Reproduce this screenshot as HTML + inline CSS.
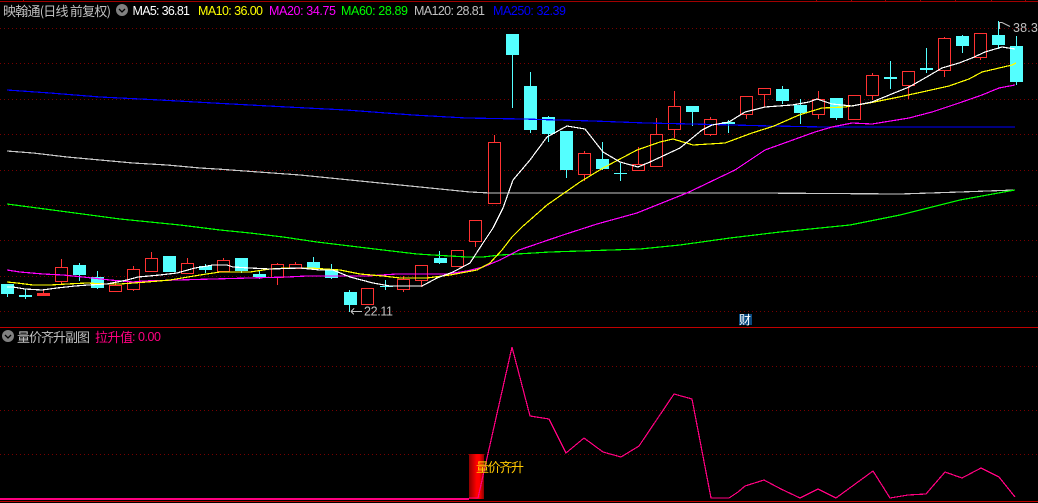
<!DOCTYPE html>
<html><head><meta charset="utf-8"><style>
html,body{margin:0;padding:0;background:#000;width:1038px;height:503px;overflow:hidden}
svg{display:block}
text{font-family:"Liberation Sans","WenQuanYi Zen Hei",sans-serif;font-size:12.5px}
.c{font-family:"WenQuanYi Zen Hei","Noto Sans CJK SC",sans-serif;font-size:13px}
.l{fill:none;stroke-width:1.2;shape-rendering:crispEdges}
</style></head><body>
<svg width="1038" height="503" viewBox="0 0 1038 503" xmlns="http://www.w3.org/2000/svg">
<defs><linearGradient id="b" x1="0" x2="1" y1="0" y2="0"><stop offset="0" stop-color="#8c0000"/><stop offset=".5" stop-color="#ff0000"/><stop offset=".7" stop-color="#ff0000"/><stop offset="1" stop-color="#8c0000"/></linearGradient></defs>
<rect width="1038" height="503" fill="#000"/>
<g shape-rendering="crispEdges">
<path d="M0 1.5H1038M23.5 0v1M816.5 0v1M851.5 0v1M885.5 0v1M920.5 0v1M955.5 0v1M991.5 0v1M1025.5 0v1" stroke="#a00000" fill="none"/>
<path d="M0 327.5H1038M0 501.5H1038" stroke="#c00000" fill="none"/>
<path d="M0 28.5H1038M0 63.5H1038M0 99.5H1038M0 134.5H1038M0 170.5H1038M0 205.5H1038M0 240.5H1038M0 276.5H1038M0 311.5H1038M0 366.5H1038M0 410.5H1038M0 454.5H1038" stroke="#780000" stroke-dasharray="1 3" fill="none"/>
<!-- red wicks -->
<path stroke="#ff3232" fill="none" d="M43.5 289V296M61.5 259V284M115.5 281V291M133.5 266V291M151.5 252V258M187.5 258V263M223.5 258V260M277.5 263V285M295.5 262V264M403.5 276V292M421.5 280V287M457.5 266V267M475.5 241V247M494.5 135V142M584.5 151V181M638.5 147V170M656.5 118V134M674.5 91V138M710.5 117V136M746.5 114V119M764.5 94V107M818.5 91V119M854.5 119V120M872.5 73V100M908.5 85V99M944.5 37V77M980.5 57V60"/>
<rect x="37" y="293" width="13" height="3" fill="#ff3232"/>
<!-- red bodies -->
<g fill="#000" stroke="#ff3232">
<rect x="55.5" y="267.5" width="12" height="14"/><rect x="109.5" y="285.5" width="12" height="6"/><rect x="127.5" y="269.5" width="12" height="20"/><rect x="145.5" y="258.5" width="12" height="13"/><rect x="181.5" y="263.5" width="12" height="10"/><rect x="217.5" y="260.5" width="12" height="11"/><rect x="271.5" y="264.5" width="12" height="13"/><rect x="289.5" y="264.5" width="12" height="4"/><rect x="361.5" y="288.5" width="12" height="16"/><rect x="397.5" y="279.5" width="12" height="10"/><rect x="415.5" y="265.5" width="12" height="15"/><rect x="451.5" y="250.5" width="12" height="16"/><rect x="469.5" y="220.5" width="12" height="21"/><rect x="488.5" y="142.5" width="12" height="61"/><rect x="578.5" y="153.5" width="12" height="21"/><rect x="632.5" y="164.5" width="12" height="6"/><rect x="650.5" y="134.5" width="12" height="32"/><rect x="668.5" y="106.5" width="12" height="23"/><rect x="704.5" y="119.5" width="12" height="15"/><rect x="740.5" y="96.5" width="12" height="18"/><rect x="758.5" y="88.5" width="12" height="6"/><rect x="812.5" y="99.5" width="12" height="15"/><rect x="848.5" y="95.5" width="12" height="24"/><rect x="866.5" y="75.5" width="12" height="20"/><rect x="902.5" y="71.5" width="12" height="14"/><rect x="938.5" y="38.5" width="12" height="32"/><rect x="974.5" y="33.5" width="12" height="24"/>
</g>
<!-- cyan wicks -->
<path stroke="#54ffff" fill="none" d="M7.5 284V297M25.5 289V299M79.5 263V281M97.5 271V289M205.5 264V273M241.5 258V273M259.5 270V279M313.5 257V270M331.5 264V279M349.5 290V312M385.5 280V290M439.5 251V264M512.5 34V108M530.5 72V133M548.5 116V142M566.5 131V178M602.5 142V170M620.5 163V181M692.5 106V126M728.5 120V133M782.5 86V104M800.5 99V124M836.5 98V120M890.5 61V89M926.5 48V73M962.5 35V53M998.5 21V49M1016.5 36V85"/>
<!-- cyan bodies -->
<g fill="#54ffff">
<rect x="1" y="284" width="13" height="10"/><rect x="19" y="295" width="13" height="2"/><rect x="73" y="265" width="13" height="10"/><rect x="91" y="277" width="13" height="11"/><rect x="163" y="256" width="13" height="16"/><rect x="199" y="266" width="13" height="4"/><rect x="235" y="258" width="13" height="13"/><rect x="253" y="274" width="13" height="3"/><rect x="307" y="262" width="13" height="6"/><rect x="325" y="270" width="13" height="8"/><rect x="344" y="292" width="13" height="13"/><rect x="380" y="286" width="13" height="1"/><rect x="434" y="258" width="13" height="5"/><rect x="506" y="34" width="13" height="21"/><rect x="524" y="86" width="13" height="44"/><rect x="542" y="117" width="13" height="17"/><rect x="560" y="131" width="13" height="39"/><rect x="596" y="159" width="13" height="10"/><rect x="614" y="173" width="13" height="1"/><rect x="686" y="106" width="13" height="6"/><rect x="722" y="122" width="13" height="2"/><rect x="776" y="89" width="13" height="12"/><rect x="794" y="105" width="13" height="8"/><rect x="830" y="98" width="13" height="20"/><rect x="884" y="77" width="13" height="2"/><rect x="920" y="68" width="13" height="2"/><rect x="956" y="36" width="13" height="10"/><rect x="992" y="35" width="13" height="10"/><rect x="1010" y="46" width="13" height="36"/>
</g>
</g>
<!-- MA lines -->
<polyline class="l" stroke="#c8c8c8" points="7,151 33,153 67,157 100,160 133,163 167,165 200,168 217,169 300,175 400,185 470,192 490,193 650,193 755,193 900,194 960,192 1015,190"/>
<polyline class="l" stroke="#0000ff" points="7,90 50,93 100,97 160,100 213,103 287,107 346,110 413,115 466,118 523,119 593,121 646,123 692,124 772,126 825,127 1015,127"/>
<polyline class="l" stroke="#00ff00" points="7,204 60,211 120,219 180,225 220,230 250,233 283,237 317,242 350,246 383,250 417,254 433,255 467,257 483,257 500,255 550,252 611,250 640,249 680,245 730,238 780,232 850,225 900,215 960,200 1015,190"/>
<polyline class="l" stroke="#ff00ff" points="7,270 20,272 43,274 63,275 83,277 110,280 133,282 143,281 177,280 213,279 250,278 287,277 307,276 343,276 367,276 397,274 447,274 467,271 483,267 500,260 519,250 563,235 597,224 637,213 687,193 735,170 765,150 815,132 832,127 852,123 872,124 909,118 932,112 959,103 982,95 999,88 1015,85"/>
<polyline class="l" stroke="#ffff00" points="7,282 17,283 33,285 50,285 67,284 87,283 107,284 120,284 147,282 170,280 200,275 220,272 250,272 270,269 287,268 310,268 340,270 360,274 383,276 400,278 427,278 450,275 477,270 490,263 502,250 512,237 522,227 547,205 580,182 603,168 637,150 660,142 673,139 693,145 725,143 752,133 774,126 799,115 822,108 845,107 869,103 899,97 922,92 949,86 969,79 982,72 1012,65 1016,63"/>
<polyline class="l" stroke="#ffffff" points="7,287 13,287 25,289 42,290 57,288 75,286 88,285 107,284 127,280 138,277 160,275 177,273 195,268 213,265 227,265 233,267 250,268 270,269 300,268 320,270 333,270 350,277 373,283 390,286 422,286 437,278 453,272 470,263 483,243 493,228 503,208 513,180 530,160 547,137 567,126 585,129 603,152 620,162 638,167 650,162 680,148 702,130 712,125 729,122 745,112 765,107 792,105 809,102 817,99 832,104 852,106 872,102 909,87 925,78 942,68 959,63 972,58 985,52 1002,47 1015,49"/>
<!-- lower pane -->
<rect x="469" y="454" width="15" height="45" fill="url(#b)"/>
<rect x="0" y="498" width="469" height="2" fill="#ff0080"/>
<polyline class="l" stroke="#ff0080" points="469,498 478,498 512,347 530,416 549,419 566,453 584,438 603,452 621,457 639,446 674,394 692,399 711,498 729,498 738,492 745,486 764,480 781,489 800,498 818,489 836,498 873,471 890,498 908,495 926,494 945,472 962,478 981,468 999,477 1015,497"/>
<text class="c" x="476" y="472" fill="#ffc800" textLength="48">量价齐升</text>
<!-- header -->
<text class="c" x="3" y="16" fill="#c0c0c0" textLength="108">映翰通(日线 前复权)</text>
<circle cx="122" cy="10" r="6" fill="#808080"/>
<path d="M119 9l3 3 3-3" fill="none" stroke="#000" stroke-width="1.3"/>
<text x="132.5" y="15" fill="#ffffff" textLength="57.5">MA5: 36.81</text>
<text x="198" y="15" fill="#ffff00" textLength="65">MA10: 36.00</text>
<text x="269" y="15" fill="#ff00ff" textLength="67">MA20: 34.75</text>
<text x="341" y="15" fill="#00ff00" textLength="67">MA60: 28.89</text>
<text x="414" y="15" fill="#c0c0c0" textLength="71">MA120: 28.81</text>
<text x="493" y="15" fill="#0000ff" textLength="73">MA250: 32.39</text>
<!-- annotations -->
<path d="M999 22.5h3l8 4" fill="none" stroke="#c0c0c0"/>
<path d="M999.5 22v7" stroke="#c0c0c0" fill="none" shape-rendering="crispEdges"/>
<text x="1013" y="32" fill="#c0c0c0" textLength="32">38.31</text>
<path d="M351 311.5h11M351 311.5l3-3M351 311.5l3 3" fill="none" stroke="#c0c0c0" shape-rendering="crispEdges"/>
<text x="364" y="315.5" fill="#c0c0c0" textLength="29">22.11</text>
<rect x="739" y="314" width="13" height="11" fill="#0a4a80"/>
<text class="c" x="739" y="324" fill="#ffffff" style="font-size:12px">财</text>
<!-- lower header -->
<circle cx="8" cy="336" r="6" fill="#808080"/>
<path d="M5 335l3 3 3-3" fill="none" stroke="#000" stroke-width="1.3"/>
<text class="c" x="17" y="342" fill="#c0c0c0" textLength="73">量价齐升副图</text>
<text class="c" x="95" y="342" fill="#ff0080" textLength="38">拉升值</text>
<text x="132" y="341" fill="#ff0080" textLength="29">: 0.00</text>
</svg>
</body></html>
